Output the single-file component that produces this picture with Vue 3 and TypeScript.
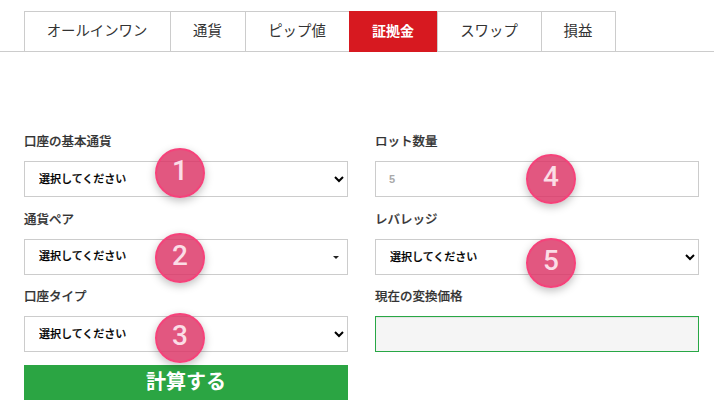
<template>
  <div class="calc">
    <!-- Tabs -->
    <ul class="tabs">
      <li
        v-for="tab in tabs"
        :key="tab.label"
        class="tab"
        :class="{ active: tab.active }"
        :style="{ width: tab.width + 'px' }"
      >
        {{ tab.label }}
      </li>
    </ul>

    <div class="form">
      <!-- Left column -->
      <div class="col">
        <div class="field">
          <label class="label">口座の基本通貨</label>
          <div class="control">
            <select class="input select"><option>選択してください</option></select>
            <span class="badge b1">1</span>
          </div>
        </div>
        <div class="field">
          <label class="label">通貨ペア</label>
          <div class="control">
            <div class="input fake-select">選択してください<i class="caret"></i></div>
            <span class="badge b2">2</span>
          </div>
        </div>
        <div class="field last">
          <label class="label">口座タイプ</label>
          <div class="control">
            <select class="input select"><option>選択してください</option></select>
            <span class="badge b3">3</span>
          </div>
        </div>
        <button class="submit" type="button">計算する</button>
      </div>

      <!-- Right column -->
      <div class="col">
        <div class="field">
          <label class="label">ロット数量</label>
          <div class="control">
            <input class="input text" type="text" placeholder="5" />
            <span class="badge b4">4</span>
          </div>
        </div>
        <div class="field second">
          <label class="label">レバレッジ</label>
          <div class="control">
            <select class="input select"><option>選択してください</option></select>
            <span class="badge b5">5</span>
          </div>
        </div>
        <div class="field last">
          <label class="label">現在の変換価格</label>
          <div class="control">
            <div class="input rate"></div>
          </div>
        </div>
      </div>
    </div>
  </div>
</template>

<script setup lang="ts">
  const tabs = [
    { label: 'オールインワン', width: 147 },
    { label: '通貨', width: 76 },
    { label: 'ピップ値', width: 105 },
    { label: '証拠金', width: 89, active: true },
    { label: 'スワップ', width: 105 },
    { label: '損益', width: 75 }
  ]
</script>

<style>
body {
  margin: 0;
  background: #fff;
}
</style>

<style scoped>
.calc {
  width: 714px;
  height: 413px;
  overflow: hidden;
  box-sizing: border-box;
  padding-top: 11px;
  font-family: "Liberation Sans", "Noto Sans CJK JP", sans-serif;
  color: #333;
}

.tabs {
  display: flex;
  list-style: none;
  margin: 0;
  padding: 0 0 0 24px;
  border-bottom: 1px solid #ccc;
  height: 40px;
}

.tab {
  box-sizing: border-box;
  height: 41px;
  margin-right: -1px;
  border: 1px solid #ccc;
  display: flex;
  align-items: center;
  justify-content: center;
  padding: 0 1px 4px 0;
  font-size: 14.4px;
  background: #fff;
}

.tab:last-child {
  margin-right: 0;
}

.tab.active {
  background: #d71920;
  border-color: #d71920;
  border-right-color: #ccc;
  color: #fff;
  font-size: 14px;
  font-weight: 700;
}

.form {
  display: flex;
  gap: 27px;
  padding: 81px 0 0 24px;
}

.col {
  width: 324px;
}

.field {
  margin-bottom: 14px;
}

.field + .field {
  margin-bottom: 13px;
}

.label {
  display: block;
  height: 28px;
  line-height: 18px;
  font-size: 12.5px;
  font-weight: 500;
  -webkit-text-stroke: 0.2px #333;
}

.control {
  position: relative;
  height: 36px;
}

.input {
  display: block;
  width: 100%;
  height: 36px;
  box-sizing: border-box;
  border: 1px solid #ccc;
  border-radius: 0;
  background: #fff;
  font-family: inherit;
  font-size: 11px;
  font-weight: 500;
  color: #000;
  outline: none;
}

.select {
  padding: 0 0 0 10px;
  -webkit-text-stroke: 0.2px #000;
}

.fake-select {
  display: flex;
  align-items: center;
  justify-content: space-between;
  padding: 0 8px 4px 14px;
  -webkit-text-stroke: 0.2px #000;
}

.caret {
  width: 0;
  height: 0;
  margin-top: 4px;
  border-left: 3px solid transparent;
  border-right: 3px solid transparent;
  border-top: 3px solid #222;
}

.text {
  padding: 0 13px;
  font-weight: 700;
}

.text::placeholder {
  color: #aaa;
  opacity: 1;
}

.rate {
  background: #f5f5f5;
  border-color: #28a745;
  box-shadow: inset 0 1px 1px rgba(0, 0, 0, 0.07);
}

.submit {
  display: block;
  width: 100%;
  height: 35px;
  padding: 0;
  border: 0;
  background: #2ba543;
  color: #fff;
  font-family: inherit;
  font-size: 20px;
  font-weight: 700;
  line-height: 33px;
}

/* numbered markers over the fields */
.badge {
  position: absolute;
  width: 50px;
  height: 50px;
  box-sizing: border-box;
  border: 2px solid #f5427a;
  border-radius: 50%;
  background: rgba(220, 50, 100, 0.82);
  box-shadow: 0 3px 8px rgba(0, 0, 0, 0.25);
  color: #fbdde6;
  font-family: Roboto, sans-serif;
  font-size: 28px;
  font-weight: 500;
  line-height: 42px;
  text-align: center;
}

.b1 { left: 131px; top: -13px; }
.b2 { left: 131px; top: -6px; }
.b3 { left: 131px; top: -3px; }
.b4 { left: 151px; top: -7px; }
.b5 { left: 151px; top: -1px; }
</style>
